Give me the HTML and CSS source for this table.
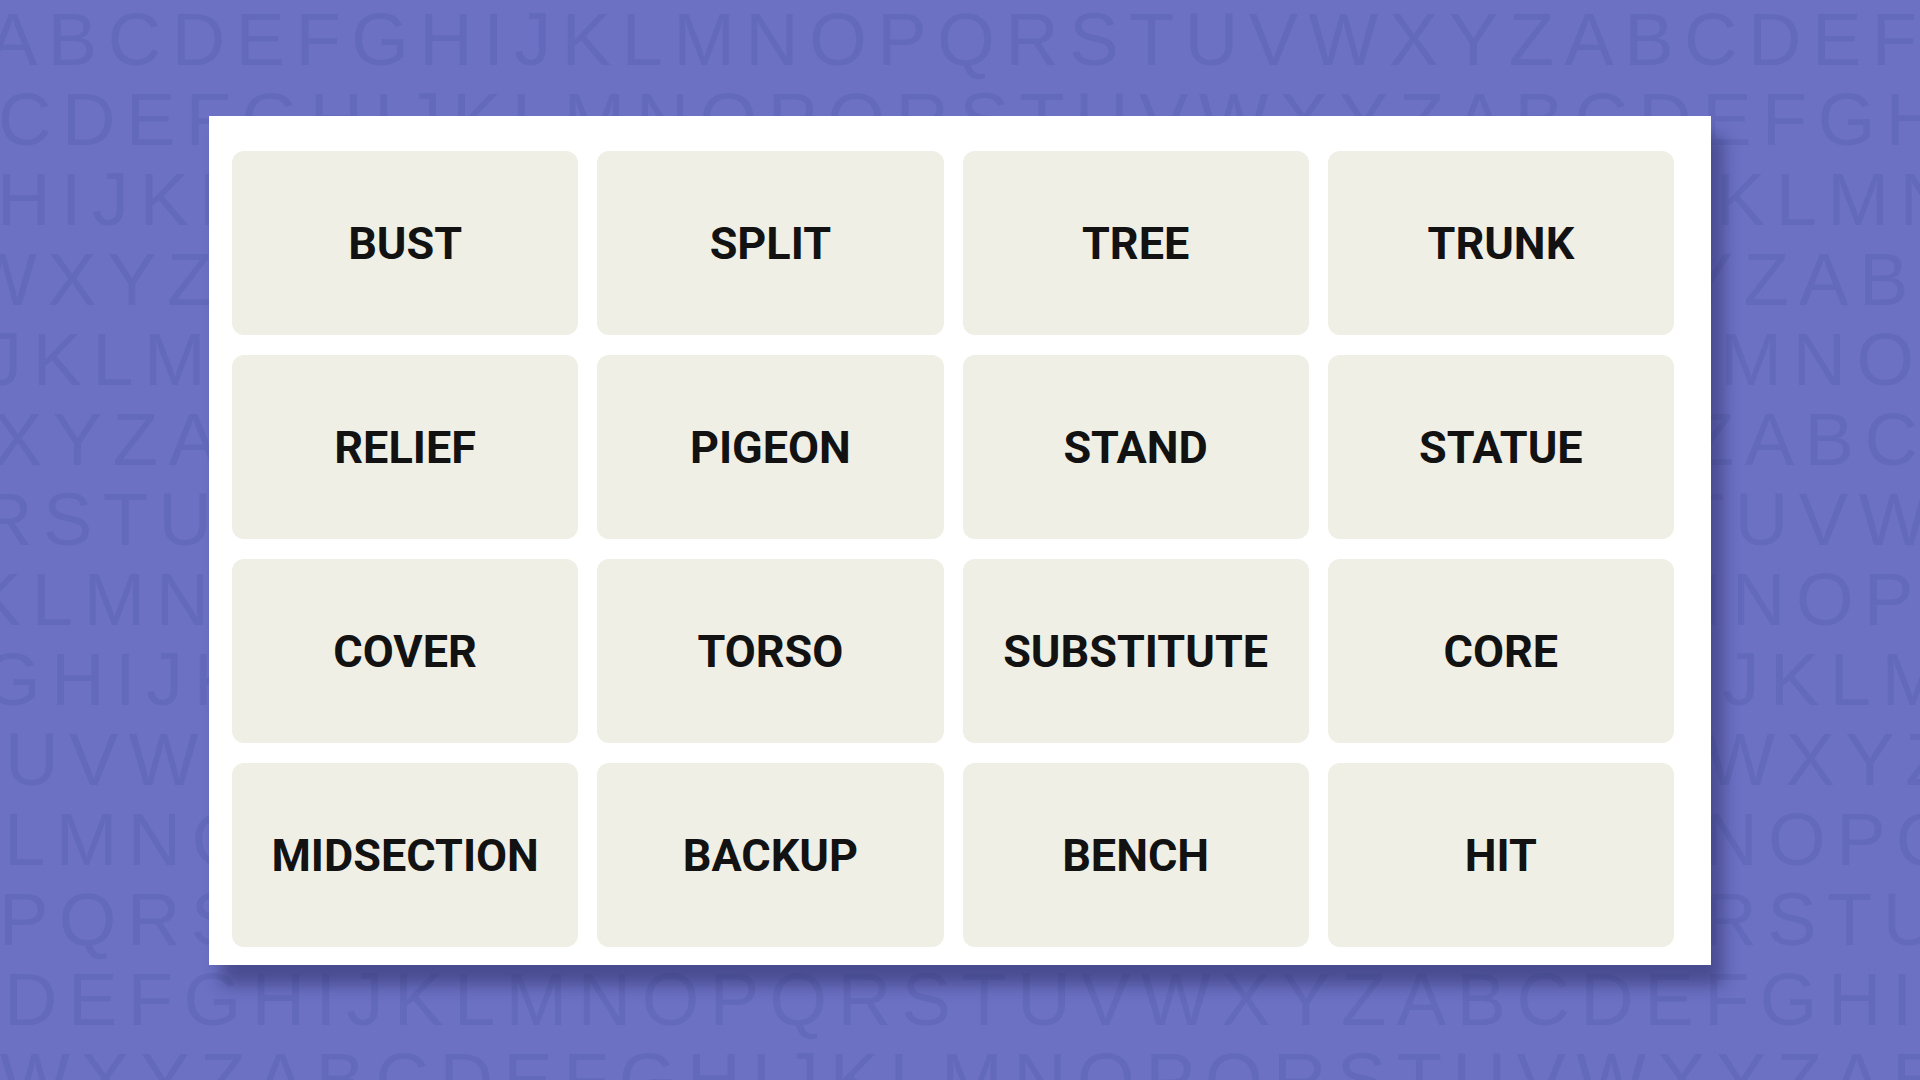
FILE: index.html
```html
<!DOCTYPE html>
<html lang="en">
<head>
<meta charset="utf-8">
<title>Connections</title>
<link rel="stylesheet" href="styles.css">
</head>
<body>
<div class="screen">
  <div class="bg" aria-hidden="true">
    <div class="row r1">ABCDEFGHIJKLMNOPQRSTUVWXYZABCDEFGHIJ</div>
    <div class="row r2">CDEFGHIJKLMNOPQRSTUVWXYZABCDEFGHIJKL</div>
    <div class="row r3">HIJKLMNOPQRSTUVWXYZABCDEFGHIJKLMNOPQ</div>
    <div class="row r4">WXYZABCDEFGHIJKLMNOPQRSTUVWXYZABCDEF</div>
    <div class="row r5">JKLMNOPQRSTUVWXYZABCDEFGHIJKLMNOPQRS</div>
    <div class="row r6">XYZABCDEFGHIJKLMNOPQRSTUVWXYZABCDEFG</div>
    <div class="row r7">RSTUVWXYZABCDEFGHIJKLMNOPQRSTUVWXYZA</div>
    <div class="row r8">KLMNOPQRSTUVWXYZABCDEFGHIJKLMNOPQRST</div>
    <div class="row r9">GHIJKLMNOPQRSTUVWXYZABCDEFGHIJKLMNOP</div>
    <div class="row r10">UVWXYZABCDEFGHIJKLMNOPQRSTUVWXYZABCD</div>
    <div class="row r11">LMNOPQRSTUVWXYZABCDEFGHIJKLMNOPQRSTU</div>
    <div class="row r12">PQRSTUVWXYZABCDEFGHIJKLMNOPQRSTUVWXY</div>
    <div class="row r13">DEFGHIJKLMNOPQRSTUVWXYZABCDEFGHIJKLM</div>
    <div class="row r14">WXYZABCDEFGHIJKLMNOPQRSTUVWXYZABCDEF</div>
  </div>
  <div class="stage">
    <div class="panel">
      <div class="grid">
        <div class="card">BUST</div>
        <div class="card">SPLIT</div>
        <div class="card">TREE</div>
        <div class="card">TRUNK</div>
        <div class="card">RELIEF</div>
        <div class="card">PIGEON</div>
        <div class="card">STAND</div>
        <div class="card">STATUE</div>
        <div class="card">COVER</div>
        <div class="card">TORSO</div>
        <div class="card">SUBSTITUTE</div>
        <div class="card">CORE</div>
        <div class="card">MIDSECTION</div>
        <div class="card">BACKUP</div>
        <div class="card">BENCH</div>
        <div class="card">HIT</div>
      </div>
    </div>
  </div>
</div>
</body>
</html>
```
FILE: styles.css
```css
html, body {
  margin: 0;
  padding: 0;
  background: #6c71c4;
}

.screen {
  width: 1920px;
  height: 1080px;
  overflow: hidden;
  display: grid;
  background: #6c71c4;
}

.bg {
  grid-area: 1 / 1;
  overflow: hidden;
  font-family: "Liberation Sans", Arial, sans-serif;
  font-size: 74px;
  line-height: 80px;
  letter-spacing: 10.5px;
  color: #646abb;
  white-space: nowrap;
}

.row { height: 80px; }
.r1 { margin-left: -12px; }
.r2 { margin-left: -2px; }
.r3 { margin-left: -3px; }
.r4 { margin-left: -33px; }
.r5 { margin-left: -15px; }
.r6 { margin-left: -7px; }
.r7 { margin-left: -21px; }
.r8 { margin-left: -28px; }
.r9 { margin-left: -17px; }
.r10 { margin-left: 5px; }
.r11 { margin-left: 4px; }
.r12 { margin-left: -1px; }
.r13 { margin-left: 4px; }
.r14 { margin-left: 0; }

.stage {
  grid-area: 1 / 1;
  padding: 116px 0 0 209px;
  align-self: start;
  justify-self: start;
}

.panel {
  background: #ffffff;
  padding: 35px 37px 18px 23px;
  box-shadow: 12px 20px 16px rgba(30, 30, 80, 0.45);
}

.grid {
  width: 1442px;
  display: grid;
  grid-template-columns: repeat(4, 1fr);
  grid-auto-rows: 184px;
  column-gap: 19px;
  row-gap: 20px;
}

.card {
  background: #efefe6;
  border-radius: 12px;
  display: flex;
  align-items: center;
  justify-content: center;
  font-family: Roboto, "Liberation Sans", sans-serif;
  font-weight: 700;
  font-size: 45px;
  color: #121212;
}
```
